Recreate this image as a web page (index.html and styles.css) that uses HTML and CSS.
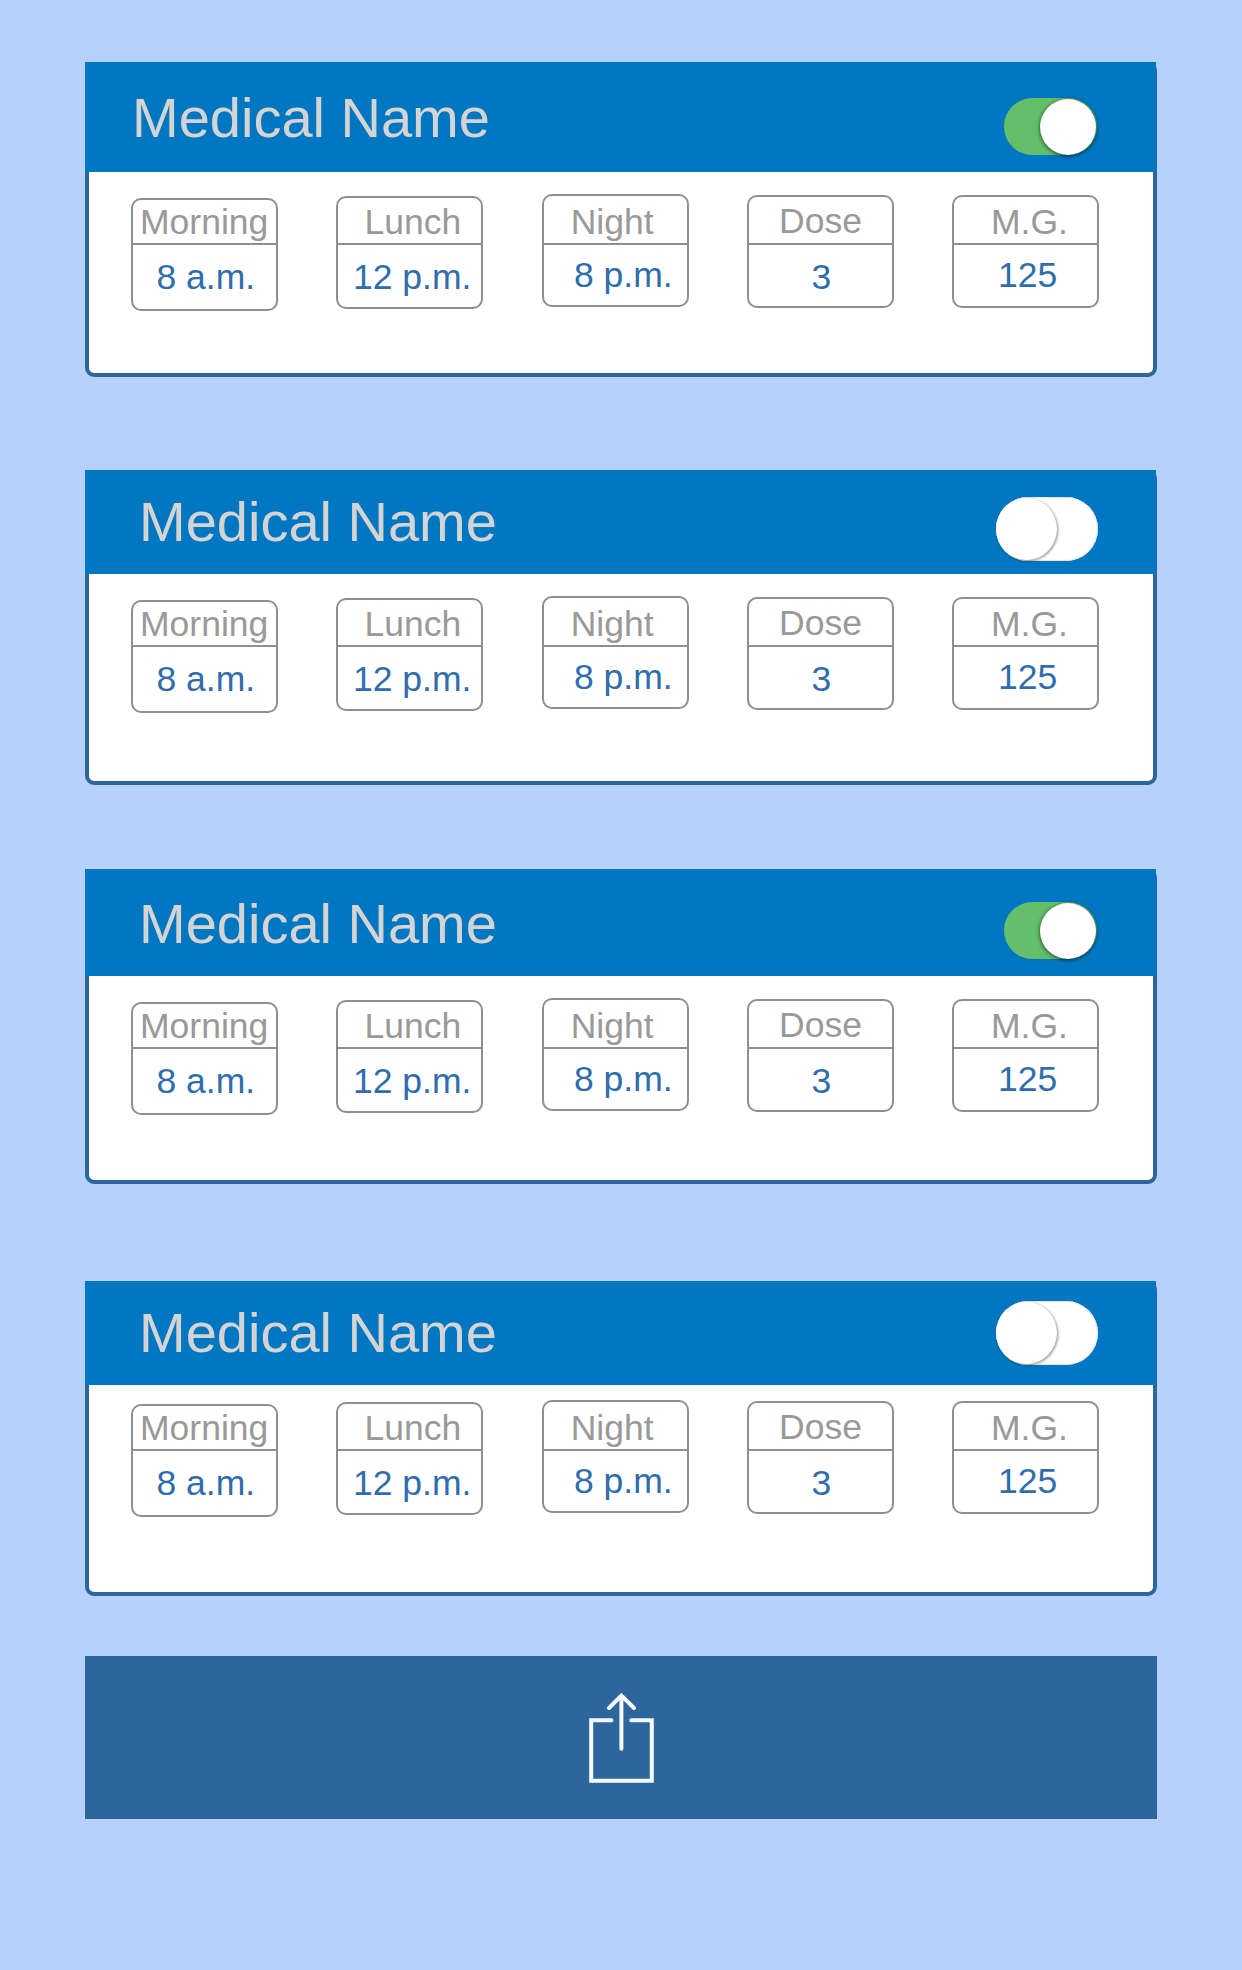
FILE: index.html
```html
<!DOCTYPE html>
<html lang="en">
<head>
<meta charset="utf-8">
<title>Medication schedule</title>
<link rel="stylesheet" href="styles.css">
</head>
<body>
<main class="page">
  <section class="card card-first">
    <header class="card-head"><h2 class="name">Medical Name</h2><span class="switch on"><span class="knob"></span></span></header>
    <div class="slots">
      <div class="slot morning"><div class="label">Morning</div><div class="value">8 a.m.</div></div>
      <div class="slot lunch"><div class="label">Lunch</div><div class="value">12 p.m.</div></div>
      <div class="slot night"><div class="label">Night</div><div class="value">8 p.m.</div></div>
      <div class="slot dose"><div class="label">Dose</div><div class="value">3</div></div>
      <div class="slot mg"><div class="label">M.G.</div><div class="value">125</div></div>
    </div>
  </section>
  <section class="card card-second">
    <header class="card-head"><h2 class="name">Medical Name</h2><span class="switch off"><span class="knob"></span></span></header>
    <div class="slots">
      <div class="slot morning"><div class="label">Morning</div><div class="value">8 a.m.</div></div>
      <div class="slot lunch"><div class="label">Lunch</div><div class="value">12 p.m.</div></div>
      <div class="slot night"><div class="label">Night</div><div class="value">8 p.m.</div></div>
      <div class="slot dose"><div class="label">Dose</div><div class="value">3</div></div>
      <div class="slot mg"><div class="label">M.G.</div><div class="value">125</div></div>
    </div>
  </section>
  <section class="card card-third">
    <header class="card-head"><h2 class="name">Medical Name</h2><span class="switch on"><span class="knob"></span></span></header>
    <div class="slots">
      <div class="slot morning"><div class="label">Morning</div><div class="value">8 a.m.</div></div>
      <div class="slot lunch"><div class="label">Lunch</div><div class="value">12 p.m.</div></div>
      <div class="slot night"><div class="label">Night</div><div class="value">8 p.m.</div></div>
      <div class="slot dose"><div class="label">Dose</div><div class="value">3</div></div>
      <div class="slot mg"><div class="label">M.G.</div><div class="value">125</div></div>
    </div>
  </section>
  <section class="card card-fourth">
    <header class="card-head"><h2 class="name">Medical Name</h2><span class="switch off"><span class="knob"></span></span></header>
    <div class="slots">
      <div class="slot morning"><div class="label">Morning</div><div class="value">8 a.m.</div></div>
      <div class="slot lunch"><div class="label">Lunch</div><div class="value">12 p.m.</div></div>
      <div class="slot night"><div class="label">Night</div><div class="value">8 p.m.</div></div>
      <div class="slot dose"><div class="label">Dose</div><div class="value">3</div></div>
      <div class="slot mg"><div class="label">M.G.</div><div class="value">125</div></div>
    </div>
  </section>
  <footer class="share-bar">
    <svg class="share-icon" viewBox="0 16 122 163" aria-label="Share">
      <path d="M51.5 80.2H31.2V140.8H91.8V80.2H71.3"/>
      <path d="M61.4 108.8V55.6M49 68L61.4 55.6L74 68"/>
    </svg>
  </footer>
</main>
</body>
</html>
```
FILE: styles.css
```css
* { box-sizing: border-box; }

body {
  margin: 0;
  background: #b7d1fd;
  font-family: "Liberation Sans", Arial, sans-serif;
}

.page {
  display: flex;
  flex-direction: column;
  width: 1242px;
  height: 1970px;
  padding: 62px 85px 0;
}

.card {
  flex: none;
  height: 315px;
  border: 4px solid #2c669d;
  border-radius: 9px;
  background: #fff;
}

.card-first { margin-bottom: 93px; }
.card-second { margin-bottom: 84px; }
.card-third { margin-bottom: 97px; }
.card-fourth { margin-bottom: 60px; }

.card-head {
  display: flex;
  justify-content: space-between;
  align-items: flex-start;
  height: 104px;
  margin: -4px -3px 0 -4px;
  padding-left: 54px;
  background: #0077c0;
}

.card-first .card-head { height: 110px; padding-left: 47px; }
.card-third .card-head { height: 107px; }

.name {
  align-self: flex-end;
  margin: 0 0 21px;
  color: #d4d4d4;
  font-size: 56px;
  font-weight: 400;
  line-height: 63px;
}

.card-first .name { margin-bottom: 23px; }

.switch {
  display: flex;
  align-items: center;
  border-radius: 32px;
}

.on {
  justify-content: flex-end;
  width: 93px;
  height: 57px;
  margin: 36px 59px 0 0;
  padding-right: 1px;
  background: #63bf69;
}

.card-third .on { margin-top: 33px; }

.off {
  width: 102px;
  height: 64px;
  margin: 27px 58px 0 0;
  background: #fff;
  box-shadow: inset 0 0 1px 1px #e4e4e4;
}

.card-fourth .off { margin-top: 20px; }

.knob {
  width: 56px;
  height: 56px;
  border-radius: 50%;
  background: #fff;
  box-shadow: 0 1px 4px rgba(0, 0, 0, .7);
}

.off .knob {
  width: 61px;
  height: 62px;
  box-shadow: 1px 1px 3px rgba(0, 0, 0, .45);
}

.slots {
  display: grid;
  grid-template-columns: 205px 206px 205px 205px 147px;
  align-items: start;
  padding: 22px 0 0 42px;
}

.card-fourth .slots { padding-top: 15px; }

.slot {
  width: 147px;
  height: 113px;
  border: 2px solid #8f8f8f;
  border-radius: 10px;
  font-size: 35.5px;
  line-height: 42px;
  white-space: nowrap;
}

.label {
  border-bottom: 2px solid #8f8f8f;
  color: #999;
}

.value {
  padding-top: 11px;
  color: #2f6dac;
}

.morning { margin-top: 4px; }
.morning .label { height: 45px; padding: 1px 0 0 7px; }
.morning .value { padding-left: 23.5px; }

.lunch { margin-top: 2px; }
.lunch .label { height: 47px; padding: 3px 0 0 26.5px; }
.lunch .value { padding-left: 15px; }

.night .label { height: 49px; padding: 5px 0 0 26.7px; }
.night .value { padding: 9px 0 0 30px; }

.dose { margin-top: 1px; }
.dose .label { height: 48px; padding: 3px 0 0 30px; }
.dose .value { padding-left: 62.5px; }

.mg { margin-top: 1px; }
.mg .label { height: 48px; padding: 4px 0 0 37px; }
.mg .value { padding: 9px 0 0 44px; }

.share-bar {
  display: flex;
  flex: none;
  justify-content: center;
  height: 163px;
  background: #2c669c;
}

.share-icon {
  width: 122px;
  height: 163px;
  fill: none;
  stroke: #f7f8fc;
  stroke-width: 4;
  stroke-linecap: round;
}
```
